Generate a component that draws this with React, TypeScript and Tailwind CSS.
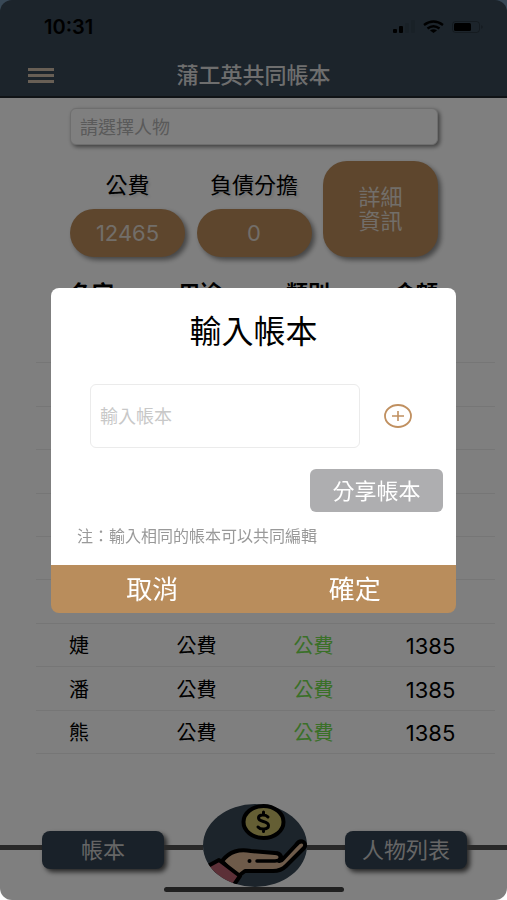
import React from "react";

type Entry = { name: string; use: string; kind: string; amount: string };

const blank: Entry = { name: "", use: "", kind: "", amount: "" };
const entries: Entry[] = [
  ...Array.from({ length: 7 }, () => blank),
  { name: "婕", use: "公費", kind: "公費", amount: "1385" },
  { name: "潘", use: "公費", kind: "公費", amount: "1385" },
  { name: "熊", use: "公費", kind: "公費", amount: "1385" },
];

function StatusIcons() {
  return (
    <svg width="92" height="16" viewBox="0 0 92 16" aria-hidden="true">
      <rect x="0" y="10" width="4" height="4" rx="1" fill="#000" />
      <rect x="6" y="7" width="4" height="7" rx="1" fill="#000" />
      <rect x="12" y="4" width="4" height="10" rx="1" fill="#000" opacity="0.08" />
      <rect x="18" y="1" width="4" height="13" rx="1" fill="#000" opacity="0.08" />
      <g fill="none" stroke="#000" strokeWidth="2.4">
        <path d="M31 6 Q40.500 -1 50 6" />
        <path d="M34.500 9.500 Q40.500 5 46.500 9.500" />
      </g>
      <path d="M37 11.500 Q40.500 9 44 11.500 L40.500 14 Z" fill="#000" />
      <rect x="59.500" y="2.500" width="27" height="11" rx="3" fill="none" stroke="#000" opacity="0.25" />
      <rect x="61" y="4" width="17" height="8" rx="1.500" fill="#000" />
      <path d="M88.500 6 q2 2 0 4 Z" fill="#000" opacity="0.4" />
    </svg>
  );
}

function HandCoin() {
  return (
    <svg width="104" height="83" viewBox="0 0 104 83" aria-hidden="true">
      <defs>
        <clipPath id="disc">
          <ellipse cx="52" cy="41.500" rx="52" ry="41.500" />
        </clipPath>
      </defs>
      <ellipse cx="52" cy="41.500" rx="52" ry="41.500" fill="#384856" />
      <g clipPath="url(#disc)" stroke="#000" strokeLinejoin="round" strokeLinecap="round">
        <path
          d="M19 57 C27 47 36 45 48 47 L72 49 C78 49 80 54 76 57 L79 56 L93 41 C98 34 105 39 101 44 L83 62 C79 66 75 67 70 67 L42 67 L34 73 Z"
          fill="#dcb694"
          strokeWidth="4"
        />
        <path d="M54 57 H72 C79 57 79 49 72 49" fill="none" strokeWidth="3.500" />
        <circle cx="46.500" cy="57" r="2" fill="#000" stroke="none" />
        <path d="M3 63 L16 56 L37 72 L28 85 Z" fill="#b8606e" strokeWidth="4" />
      </g>
      <ellipse cx="60.500" cy="18" rx="20" ry="16" fill="#c8bc68" stroke="#000" strokeWidth="4" />
      <path
        d="M65 13 C63 10.500 55.500 10 55.500 14 C55.500 18.500 65.500 16.500 65.500 21.500 C65.500 26 57.500 26 55 23 M60.500 8 V10 M60.500 25.500 V27.500"
        fill="none"
        stroke="#000"
        strokeWidth="3"
        strokeLinecap="round"
      />
    </svg>
  );
}

function Stat({ label, value }: { label: string; value: string }) {
  return (
    <div className="flex w-[115px] flex-col items-center">
      <span className="flex h-12 items-center whitespace-nowrap text-[22px] leading-6 text-black [text-shadow:2px_2px_3px_rgba(0,0,0,0.15)]">
        {label}
      </span>
      <span className="flex h-12 w-full items-center justify-center rounded-3xl bg-[#bc8c5a] text-[22px] leading-6 text-[#e4dcd2] shadow-[3px_3px_5px_rgba(0,0,0,0.45)]">
        {value}
      </span>
    </div>
  );
}

function NavButton({ children }: { children: React.ReactNode }) {
  return (
    <button
      type="button"
      className="mt-2 h-[38px] w-[122px] rounded-lg bg-[#324252] text-[22px] leading-6 text-[#cccccc] shadow-[3px_3px_5px_rgba(0,0,0,0.7)]"
    >
      {children}
    </button>
  );
}

export default function App() {
  return (
    <div className="flex min-h-screen flex-col bg-white font-['Inter','Noto_Sans_CJK_TC',sans-serif]">
      <header className="h-[98px] border-b-2 border-[#20262c] bg-[#384856]">
        <div className="flex h-[54px] items-center justify-between pr-[22px] pl-[44px]">
          <time className="text-xl leading-6 font-semibold text-black">10:31</time>
          <StatusIcons />
        </div>
        <div className="grid h-[42px] grid-cols-[1fr_auto_1fr] items-center px-7">
          <button type="button" aria-label="選單" className="flex w-[26px] flex-col gap-[3px]">
            <span className="h-[3px] bg-[#d0beaa]" />
            <span className="h-[3px] bg-[#d0beaa]" />
            <span className="h-[3px] bg-[#d0beaa]" />
          </button>
          <h1 className="text-[22px] leading-6 font-medium text-[#dddddd]">蒲工英共同帳本</h1>
        </div>
      </header>

      <main className="flex flex-col">
        <div className="pt-[10px] pr-[69px] pl-[70px]">
          <input
            type="text"
            aria-label="請選擇人物"
            placeholder="請選擇人物"
            className="block h-[37px] w-full rounded-md border border-[#dddddd] bg-white px-[9px] pt-[2px] text-lg shadow-[2px_2px_4px_rgba(0,0,0,0.5)] placeholder:text-[#b4b4b4]"
          />
          <section className="mt-4 flex justify-between">
            <Stat label="公費" value="12465" />
            <Stat label="負債分擔" value="0" />
            <button
              type="button"
              className="h-24 w-[115px] rounded-3xl bg-[#bc8c5a] text-[22px] leading-6 text-[#e4dcd2] shadow-[3px_3px_5px_rgba(0,0,0,0.45)]"
            >
              詳細
              <br />
              資訊
            </button>
          </section>
        </div>

        <table className="mt-6 block">
          <thead className="block pr-[69px] pl-[70px]">
            <tr className="flex h-[39px] justify-between text-[22px] leading-6 text-black">
              <th className="font-bold">名字</th>
              <th className="font-bold">用途</th>
              <th className="font-bold">類別</th>
              <th className="font-bold">金額</th>
            </tr>
          </thead>
          <tbody className="mr-3 ml-9 grid h-[434px] auto-rows-fr">
            {entries.map((e, i) => (
              <tr
                key={i}
                className="grid grid-cols-[102px_1fr_1fr_1fr] items-center border-b border-[#ececec] pt-[3px] pr-[6px] text-center text-xl leading-6 text-black"
              >
                <td className="pr-4">{e.name}</td>
                <td>{e.use}</td>
                <td className="text-[#74e050]">{e.kind}</td>
                <td className="text-[22px]">{e.amount}</td>
              </tr>
            ))}
          </tbody>
        </table>
      </main>

      <footer className="mt-auto flex flex-col items-center pb-2">
        <nav className="flex w-full items-center">
          <span className="mt-1 h-[5px] w-[42px] bg-[#505050]" />
          <NavButton>帳本</NavButton>
          <span className="mt-1 h-[5px] flex-1 bg-[#505050]" />
          <button type="button" aria-label="記帳" className="h-[83px] w-[104px]">
            <HandCoin />
          </button>
          <span className="mt-1 h-[5px] flex-1 bg-[#505050]" />
          <NavButton>人物列表</NavButton>
          <span className="mt-1 h-[5px] w-[40px] bg-[#505050]" />
        </nav>
        <span className="h-[5px] w-[180px] rounded-full bg-[#404040]" />
      </footer>

      <div className="fixed inset-0 flex items-center rounded-xl bg-black/50 px-[51px]">
        <form
          role="dialog"
          aria-labelledby="dialog-title"
          className="w-full"
          onSubmit={(ev) => ev.preventDefault()}
        >
          <div className="rounded-t-lg bg-white pt-[26px] pb-[17px]">
            <h2 id="dialog-title" className="text-center text-[32px] leading-9 text-black">
              輸入帳本
            </h2>
            <div className="mt-[34px] flex items-center pr-11 pl-[39px]">
              <input
                type="text"
                aria-label="輸入帳本"
                placeholder="輸入帳本"
                className="h-16 min-w-0 flex-1 rounded-md border border-[#ebebeb] px-[9px] pt-[2px] text-lg placeholder:text-[#c8c8c8]"
              />
              <button type="button" aria-label="新增" className="ml-6">
                <svg width="28" height="24" viewBox="0 0 28 24" fill="none" stroke="#c09060" aria-hidden="true">
                  <ellipse cx="14" cy="12" rx="13" ry="11" strokeWidth="1.800" />
                  <path d="M8 12 H20 M14 7 V17" strokeWidth="1.600" />
                </svg>
              </button>
            </div>
            <div className="mt-[21px] flex justify-end pr-[13px]">
              <button type="button" className="h-[43px] w-[133px] rounded-md bg-[#aeaeb0] pt-[2px] text-[22px] leading-6 text-white">
                分享帳本
              </button>
            </div>
            <p className="mt-3 pl-[26px] text-base leading-6 text-[#999999]">注：輸入相同的帳本可以共同編輯</p>
          </div>
          <div className="grid h-12 grid-cols-2 rounded-b-lg bg-[#b98d5c] pt-[2px] text-[26px] leading-8 text-white">
            <button type="button">取消</button>
            <button type="submit">確定</button>
          </div>
        </form>
      </div>
    </div>
  );
}
